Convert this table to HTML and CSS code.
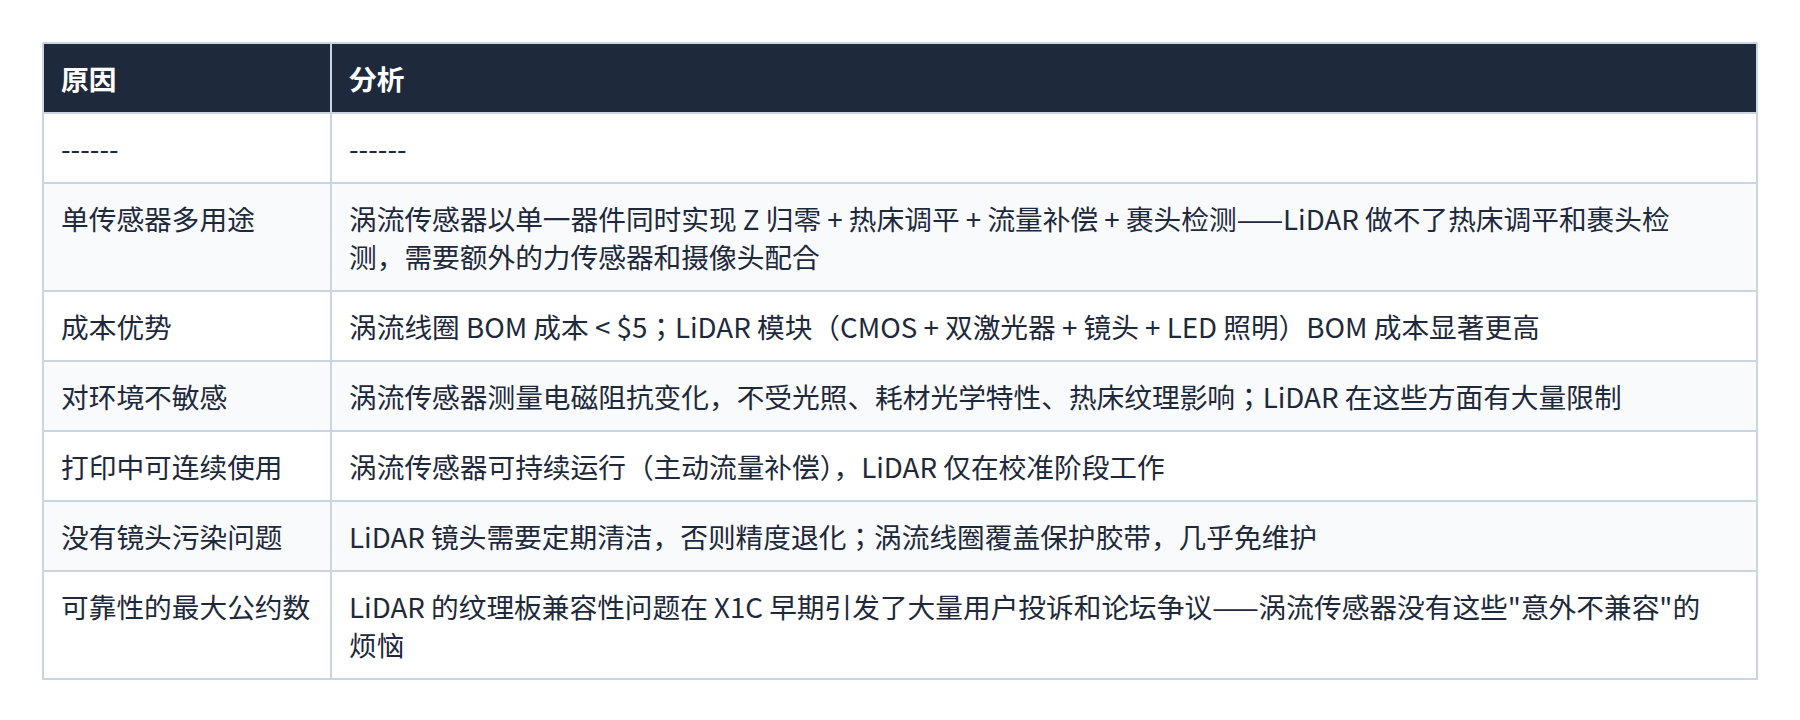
FILE: index.html
```html
<!DOCTYPE html>
<html>
<head>
<meta charset="utf-8">
<title>原因分析</title>
<link rel="stylesheet" href="styles.css">
</head>
<body>
<div class="page">
  <table class="grid">
    <thead>
      <tr><th class="col-a">原因</th><th class="col-b">分析</th></tr>
    </thead>
    <tbody>
      <tr><td>------</td><td>------</td></tr>
      <tr><td>单传感器多用途</td><td>涡流传感器以单一器件同时实现 Z 归零 + 热床调平 + 流量补偿 + 裹头检测——LiDAR 做不了热床调平和裹头检测，需要额外的力传感器和摄像头配合</td></tr>
      <tr><td>成本优势</td><td>涡流线圈 BOM 成本 &lt; $5；LiDAR 模块（CMOS + 双激光器 + 镜头 + LED 照明）BOM 成本显著更高</td></tr>
      <tr><td>对环境不敏感</td><td>涡流传感器测量电磁阻抗变化，不受光照、耗材光学特性、热床纹理影响；LiDAR 在这些方面有大量限制</td></tr>
      <tr><td>打印中可连续使用</td><td>涡流传感器可持续运行（主动流量补偿），LiDAR 仅在校准阶段工作</td></tr>
      <tr><td>没有镜头污染问题</td><td>LiDAR 镜头需要定期清洁，否则精度退化；涡流线圈覆盖保护胶带，几乎免维护</td></tr>
      <tr><td>可靠性的最大公约数</td><td>LiDAR 的纹理板兼容性问题在 X1C 早期引发了大量用户投诉和论坛争议——涡流传感器没有这些"意外不兼容"的烦恼</td></tr>
    </tbody>
  </table>
</div>
</body>
</html>
```

FILE: styles.css
```css
html, body {
  margin: 0;
  padding: 0;
  background: #ffffff;
}

.page {
  padding: 42px;
  font-family: "Noto Sans CJK JP", "Noto Sans CJK SC", "Noto Sans", sans-serif;
  color: #1e293b;
}

.grid {
  width: 100%;
  border-collapse: collapse;
  border: 2px solid #cbd5e1;
  font-size: 27.7px;
  line-height: 38px;
}

.grid th,
.grid td {
  border: 2px solid #cbd5e1;
  padding: 15px 17px;
  text-align: left;
  vertical-align: top;
}

.grid th:last-child,
.grid td:last-child {
  padding-right: 32px;
}

.grid th {
  background: #1e293b;
  color: #ffffff;
  font-weight: 700;
}

.grid .col-a {
  width: 252px;
}

.grid tbody tr:nth-child(odd) {
  background: #ffffff;
}

.grid tbody tr:nth-child(even) {
  background: #f8fafc;
}
```
